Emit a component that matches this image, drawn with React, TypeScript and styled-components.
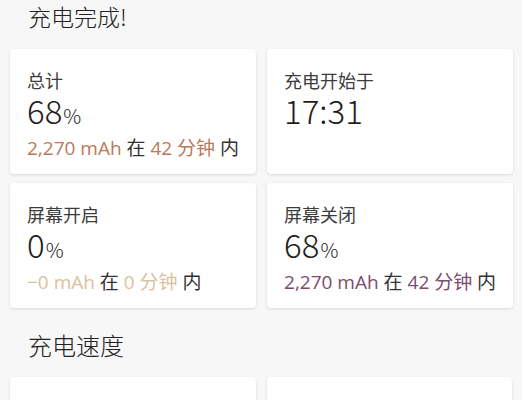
import styled, { createGlobalStyle } from "styled-components";

const GlobalStyle = createGlobalStyle`
  body {
    margin: 0;
    background: #f7f7f7;
    font-family: "Noto Sans CJK SC", "Noto Sans", sans-serif;
    color: #222;
  }
`;

type Part = { text: string; hl?: boolean };

type Stat = {
  label: string;
  value: string;
  unit?: string;
  sub?: Part[];
  tone?: string;
};

const usage = (mah: string, min: string): Part[] => [
  { text: `${mah} mAh`, hl: true },
  { text: " 在 " },
  { text: min, hl: true },
  { text: " 分钟", hl: true },
  { text: " 内" },
];

const done: Stat[] = [
  { label: "总计", value: "68", unit: "%", sub: usage("2,270", "42"), tone: "#b9795a" },
  { label: "充电开始于", value: "17:31" },
  { label: "屏幕开启", value: "0", unit: "%", sub: usage("−0", "0"), tone: "#dcc19c" },
  { label: "屏幕关闭", value: "68", unit: "%", sub: usage("2,270", "42"), tone: "#7c4b6e" },
];

const speed: Stat[] = [
  { label: "平均", value: "" },
  { label: "最高", value: "" },
];

function StatCard({ stat }: { stat: Stat }) {
  return (
    <Card>
      <Label>{stat.label}</Label>
      {stat.value && (
        <Value>
          {stat.value}
          {stat.unit && <Unit>{stat.unit}</Unit>}
        </Value>
      )}
      {stat.sub && (
        <Sub>
          {stat.sub.map((p, i) => (
            <SubPart key={i} $color={p.hl ? stat.tone : undefined}>
              {p.text}
            </SubPart>
          ))}
        </Sub>
      )}
    </Card>
  );
}

export default function App() {
  return (
    <Page>
      <GlobalStyle />
      <Title>充电完成!</Title>
      <Grid>
        {done.map((s) => (
          <StatCard key={s.label} stat={s} />
        ))}
      </Grid>
      <Section>充电速度</Section>
      <Grid>
        {speed.map((s) => (
          <StatCard key={s.label} stat={s} />
        ))}
      </Grid>
    </Page>
  );
}

const Page = styled.div`
  padding: 0 10px;
  height: 400px;
  overflow: hidden;
`;

const Title = styled.h1`
  margin: 0;
  padding: 0 0 0 18px;
  height: 49px;
  font-size: 23px;
  font-weight: 300;
  line-height: 33px;
  color: #222;
`;

const Section = styled.h2`
  margin: 0;
  padding: 5px 0 0 18px;
  height: 64px;
  font-size: 24px;
  font-weight: 300;
  line-height: 64px;
  color: #222;
`;

const Grid = styled.div`
  display: grid;
  grid-template-columns: 1fr 1fr;
  gap: 9px 11px;
`;

const Card = styled.div`
  background: #fff;
  border-radius: 4px;
  box-shadow: 0 1px 3px rgba(0, 0, 0, 0.12);
  padding: 19px 17px 0;
  height: 125px;
  box-sizing: border-box;
`;

const Label = styled.div`
  font-size: 18px;
  line-height: 24px;
  color: #3c3c3c;
`;

const Value = styled.div`
  font-size: 33px;
  font-weight: 300;
  line-height: 36px;
  color: #1e1e1e;
`;

const Unit = styled.span`
  font-size: 20px;
  margin-left: 1px;
`;

const Sub = styled.div`
  font-family: "Open Sans", "Noto Sans CJK SC", sans-serif;
  font-size: 19px;
  line-height: 28px;
  color: #333;
  white-space: nowrap;
`;

const SubPart = styled.span<{ $color?: string }>`
  color: ${(p) => p.$color ?? "#333"};
`;
